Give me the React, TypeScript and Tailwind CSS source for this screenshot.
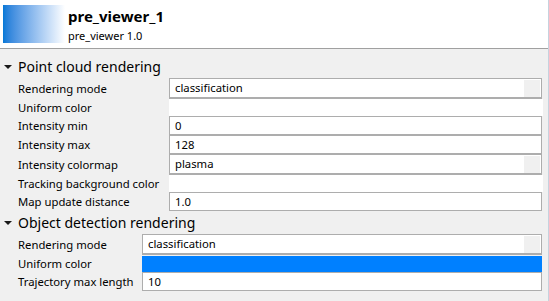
import React from "react";

type Row = {
  label: string;
  kind: "combo" | "input" | "color";
  value?: string;
  color?: string;
};

const pointCloud: Row[] = [
  { label: "Rendering mode", kind: "combo", value: "classification" },
  { label: "Uniform color", kind: "color", color: "#ffffff" },
  { label: "Intensity min", kind: "input", value: "0" },
  { label: "Intensity max", kind: "input", value: "128" },
  { label: "Intensity colormap", kind: "combo", value: "plasma" },
  { label: "Tracking background color", kind: "color", color: "#ffffff" },
  { label: "Map update distance", kind: "input", value: "1.0" },
];

const objectDetection: Row[] = [
  { label: "Rendering mode", kind: "combo", value: "classification" },
  { label: "Uniform color", kind: "color", color: "#0080ff" },
  { label: "Trajectory max length", kind: "input", value: "10" },
];

const Field = ({ row }: { row: Row }) => {
  if (row.kind === "combo") {
    return (
      <div className="flex-1 h-[21px] flex items-center bg-white border border-b-2 border-[#adadad] pl-[5px] pr-[1px] mr-[6px]">
        <span className="flex-1 text-[11.3px] leading-none">{row.value}</span>
        <div className="w-[16px] h-[17px] bg-[#f0f0f0]" />
      </div>
    );
  }
  if (row.kind === "color") {
    return (
      <div
        className={
          row.color === "#ffffff"
            ? "flex-1 h-[17px] mr-[5px] bg-white"
            : "flex-1 h-[16px] mt-[1px] mr-[6px] bg-[#0080ff]"
        }
      />
    );
  }
  return (
    <div className="flex-1 h-[19px] flex items-center bg-white border border-[#adadad] pl-[5px] mr-[6px]">
      <span className="text-[11.3px] leading-none">{row.value}</span>
    </div>
  );
};

const Section = ({
  title,
  rows,
  labelWidth,
}: {
  title: string;
  rows: Row[];
  labelWidth: string;
}) => (
  <div>
    <div className="h-[23px] flex items-center">
      <svg width="18" height="10" viewBox="0 0 18 10" className="shrink-0">
        <path d="M4 3 L12 3 L8 7 Z" fill="#1a1a1a" />
      </svg>
      <span className="text-[14px] leading-none">{title}</span>
    </div>
    {rows.map((row, i) => (
      <div key={i} className="flex items-center">
        <div className={`${labelWidth} shrink-0 pl-[18px] text-[11.3px] leading-none`}>
          {row.label}
        </div>
        <Field row={row} />
      </div>
    ))}
  </div>
);

export default function App() {
  return (
    <div
      className="w-[549px] h-[301px] flex bg-[#f0f0f0] text-black overflow-hidden"
      style={{ fontFamily: '"Noto Sans", "Open Sans", sans-serif' }}
    >
      <div className="flex-1 flex flex-col">
        {/* Header */}
        <div className="h-[49px] bg-white border-b border-[#a0a0a0] flex items-start pt-[5px] pl-[3px]">
          <div className="w-[62px] h-[38px] bg-gradient-to-r from-[#0078d7] to-white" />
          <div className="ml-[3px] flex flex-col">
            <span className="text-[15px] font-bold leading-none mt-[4px]">pre_viewer_1</span>
            <span className="text-[11px] leading-none mt-[6px]">pre_viewer 1.0</span>
          </div>
        </div>

        <div className="pt-[6px]">
          <Section title="Point cloud rendering" rows={pointCloud} labelWidth="w-[169px]" />
          <Section title="Object detection rendering" rows={objectDetection} labelWidth="w-[142px]" />
        </div>
      </div>
      <div className="w-px bg-[#c6d2de]" />
    </div>
  );
}
